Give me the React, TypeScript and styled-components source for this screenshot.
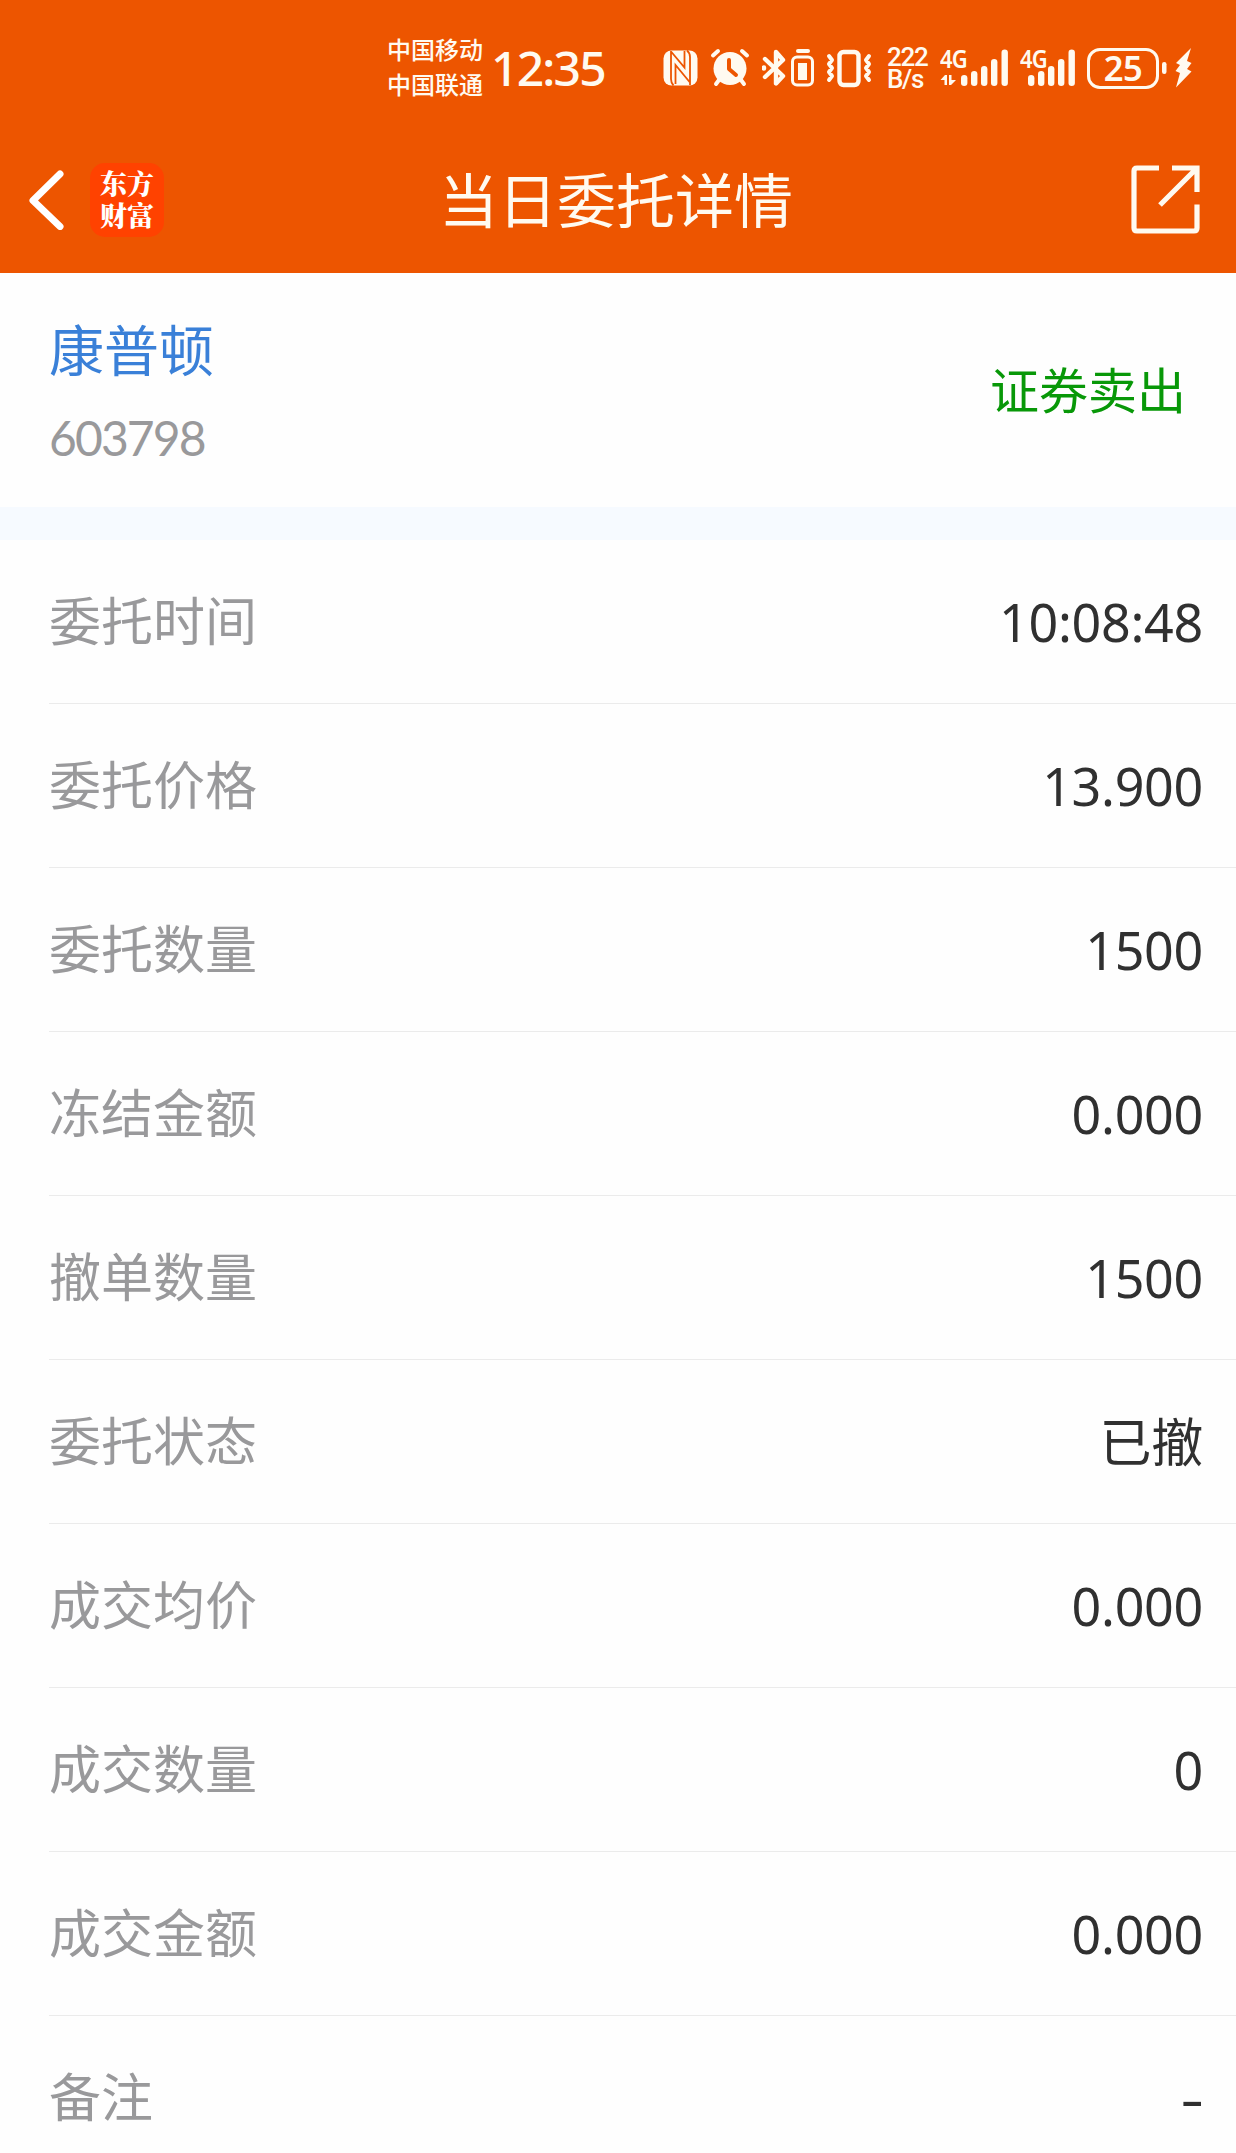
import React from "react";
import styled, { createGlobalStyle } from "styled-components";

const ORANGE = "#ed5500";
const CREAM = "#fffaf0";
const CJK = '"Noto Sans CJK SC", sans-serif';

const GlobalStyle = createGlobalStyle`
  * { box-sizing: border-box; }
  body { margin: 0; background: #fefefe; }
`;

const Screen = styled.div`
  width: 1236px;
  height: 2153px;
  overflow: hidden;
  display: flex;
  flex-direction: column;
  background: #fefefe;
  font-family: "Noto Sans", ${CJK};
`;

const Header = styled.header`
  height: 273px;
  flex: none;
  background: ${ORANGE};
  color: ${CREAM};
  display: flex;
  flex-direction: column;
`;

const StatusBar = styled.div`
  height: 136px;
  padding-left: 387px;
  display: flex;
  align-items: center;
`;

const Carriers = styled.div`
  width: 98px;
  margin-right: 6px;
  padding-bottom: 4px;
  display: flex;
  flex-direction: column;
  font: 500 24px/35px ${CJK};
  white-space: nowrap;
`;

const Clock = styled.div`
  width: 172px;
  font-size: 48px;
  font-weight: 500;
  line-height: 60px;
  letter-spacing: -1.8px;
`;

const Glyph = styled.svg<{ $gap?: number }>`
  flex: none;
  display: block;
  margin-right: ${(p) => p.$gap ?? 0}px;
`;

const Speed = styled.div`
  width: 41px;
  margin-right: 12px;
  display: flex;
  flex-direction: column;
  font: 500 26px/22px Roboto, sans-serif;
  letter-spacing: -1.3px;
  white-space: nowrap;
`;

const Signal = styled.div<{ $gap: number }>`
  position: relative;
  margin-right: ${(p) => p.$gap}px;
`;

const Network = styled.span`
  position: absolute;
  left: 0;
  top: -3px;
  font: 600 25px/25px "Noto Sans", sans-serif;
  letter-spacing: -1px;
  transform: scaleX(0.88);
  transform-origin: left;
`;

const Battery = styled.div`
  width: 72px;
  height: 41px;
  margin-right: 3px;
  border: 3px solid ${CREAM};
  border-radius: 13px;
  display: flex;
  align-items: center;
  justify-content: center;
  font-size: 34.5px;
  font-weight: 600;
  line-height: 34px;
  letter-spacing: -0.5px;
`;

const NavBar = styled.nav`
  flex: 1;
  display: grid;
  grid-template-columns: 298px 1fr 294px;
  align-items: center;
  padding: 0 36px 9px 28px;
`;

const NavLeft = styled.div`
  display: flex;
  align-items: center;
  gap: 26px;
`;

const Logo = styled.div`
  width: 74px;
  height: 74px;
  padding-bottom: 3px;
  border-radius: 15px;
  background: #ff4200;
  color: #fff;
  display: flex;
  flex-direction: column;
  align-items: center;
  justify-content: center;
  font: 900 27px/32px "Noto Serif CJK SC", ${CJK};
`;

const Title = styled.h1`
  margin: 0;
  padding-bottom: 5px;
  text-align: center;
  font: 400 59px/70px ${CJK};
  white-space: nowrap;
`;

const NavRight = styled.div`
  display: flex;
  justify-content: flex-end;
`;

const Stock = styled.section`
  height: 234px;
  flex: none;
  padding: 0 50px 0 49px;
  display: flex;
  justify-content: space-between;
  align-items: center;
`;

const StockId = styled.div`
  display: flex;
  flex-direction: column;
  gap: 3px;
  padding-top: 16px;
`;

const StockName = styled.div`
  color: #3a80d8;
  font: 400 55px/76px ${CJK};
`;

const StockCode = styled.div`
  color: #99999b;
  font: 400 48px/100px Lato, sans-serif;
  letter-spacing: -1.9px;
`;

const Side = styled.div`
  padding-bottom: 5px;
  color: #089808;
  font: 400 49px/60px ${CJK};
`;

const Band = styled.div`
  height: 33px;
  flex: none;
  background: #f6faff;
`;

const List = styled.dl`
  margin: 0;
  padding-left: 49px;
`;

const Row = styled.div`
  height: 164px;
  padding-right: 33px;
  border-bottom: 1px solid #ebebeb;
  display: flex;
  align-items: center;
  justify-content: space-between;
`;

const Label = styled.dt`
  padding-bottom: 5px;
  color: #99999b;
  font: 400 52px/76px ${CJK};
`;

const Value = styled.dd<{ $dash: boolean }>`
  margin: 0;
  color: #303030;
  font: 400 52px/76px "Noto Sans", ${CJK};
  letter-spacing: -0.3px;
  transform: ${(p) => (p.$dash ? "scaleX(1.4)" : "none")};
  transform-origin: right;
`;

const rows: [string, string][] = [
  ["委托时间", "10:08:48"],
  ["委托价格", "13.900"],
  ["委托数量", "1500"],
  ["冻结金额", "0.000"],
  ["撤单数量", "1500"],
  ["委托状态", "已撤"],
  ["成交均价", "0.000"],
  ["成交数量", "0"],
  ["成交金额", "0.000"],
  ["备注", "-"],
];

const Nfc = () => (
  <Glyph $gap={12} width="35" height="40" viewBox="0 0 35 40" fill="none">
    <rect x="0.5" y="2.5" width="34" height="35" rx="8" fill={CREAM} />
    <path d="M8 3V31Q8 35 10.500 37.500M8 3.500L21.500 19.500V3M12.500 36V17L27 34.500M27 37V9Q27 5 24 2.500" stroke={ORANGE} strokeWidth="1.800" />
  </Glyph>
);

const Alarm = () => (
  <Glyph $gap={12} width="40" height="40" viewBox="0 0 40 40" fill="none" stroke={CREAM} strokeLinecap="round">
    <circle cx="20" cy="20.500" r="16.500" fill={CREAM} stroke="none" />
    <path d="M3 7.500L8 3M32 3L37 7.500M9 32L6 36M31 32L34 36" strokeWidth="4" />
    <path d="M19 12V21L26 27" stroke={ORANGE} strokeWidth="4" strokeLinejoin="round" />
  </Glyph>
);

const BluetoothBattery = () => (
  <Glyph $gap={12} width="52" height="42" viewBox="0 0 52 42" fill="none" stroke={CREAM} strokeLinejoin="round" strokeLinecap="round">
    <path d="M3 12L21 29L14 36.500V5L21 13L3 30M2 20.500V21.500" strokeWidth="4.400" />
    <rect x="30.500" y="10" width="20" height="28" rx="4.500" strokeWidth="3" />
    <rect x="36" y="16" width="9" height="17" fill={CREAM} stroke="none" />
    <path d="M36 4H46" strokeWidth="4" />
  </Glyph>
);

const Vibrate = () => (
  <Glyph $gap={15} width="46" height="42" viewBox="0 0 46 42" fill="none" stroke={CREAM} strokeLinejoin="round" strokeLinecap="round">
    <rect x="13.500" y="5" width="19" height="33" rx="4" strokeWidth="4.400" />
    <path d="M3 9L6 13L3 17L6 21L3 25L6 29L3 33M43 9L40 13L43 17L40 21L43 25L40 29L43 33" strokeWidth="4" />
  </Glyph>
);

const bars = (xs: number[], tops: number[]) =>
  xs.map((x, i) => (
    <rect key={x} x={x} y={tops[i]} width="6.400" height={37 - tops[i]} rx="3.200" fill={CREAM} />
  ));

const App = () => (
  <Screen>
    <GlobalStyle />
    <Header>
      <StatusBar>
        <Carriers>
          <span>中国移动</span>
          <span>中国联通</span>
        </Carriers>
        <Clock>12:35</Clock>
        <Nfc />
        <Alarm />
        <BluetoothBattery />
        <Vibrate />
        <Speed>
          <span>222</span>
          <span>B/s</span>
        </Speed>
        <Signal $gap={12}>
          <Network>4G</Network>
          <Glyph width="68" height="38" viewBox="0 0 68 38">
            {bars([21, 31, 41, 51, 61.5], [26, 22, 17, 10, 0.5])}
            <path d="M0.500 31L5 26H7V36H4.500V31ZM9 26H11.500V31H16L11 36H9Z" fill={CREAM} />
          </Glyph>
        </Signal>
        <Signal $gap={12}>
          <Network>4G</Network>
          <Glyph width="55" height="38" viewBox="0 0 55 38">
            {bars([8, 18, 28, 38, 48.5], [26, 22, 17, 10, 0.5])}
          </Glyph>
        </Signal>
        <Battery>25</Battery>
        <Glyph width="30" height="42" viewBox="0 0 30 42">
          <rect x="0" y="15" width="4.500" height="12" rx="2.200" fill={CREAM} />
          <path d="M29 1L14 16L18 18L13.500 24L18 26L14 40.500L29.500 24.500L25 22L29.500 16L25 14Z" fill={CREAM} />
        </Glyph>
      </StatusBar>
      <NavBar>
        <NavLeft>
          <Glyph width="36" height="60" viewBox="0 0 36 60" fill="none">
            <path d="M32 4L5 30.500L32 56.500" stroke="#fff" strokeWidth="7" strokeLinecap="round" strokeLinejoin="round" />
          </Glyph>
          <Logo>
            <span>东方</span>
            <span>财富</span>
          </Logo>
        </NavLeft>
        <Title>当日委托详情</Title>
        <NavRight>
          <Glyph width="70" height="70" viewBox="0 0 70 70" fill="none" stroke={CREAM} strokeWidth="5.200">
            <path d="M29 3H7Q4 3 4 6V63Q4 66 7 66H64Q67 66 67 63V39.500M42 3H67V27M67 3L30 40" />
          </Glyph>
        </NavRight>
      </NavBar>
    </Header>
    <Stock>
      <StockId>
        <StockName>康普顿</StockName>
        <StockCode>603798</StockCode>
      </StockId>
      <Side>证券卖出</Side>
    </Stock>
    <Band />
    <List>
      {rows.map(([label, value]) => (
        <Row key={label}>
          <Label>{label}</Label>
          <Value $dash={value === "-"}>{value}</Value>
        </Row>
      ))}
    </List>
  </Screen>
);

export default App;
